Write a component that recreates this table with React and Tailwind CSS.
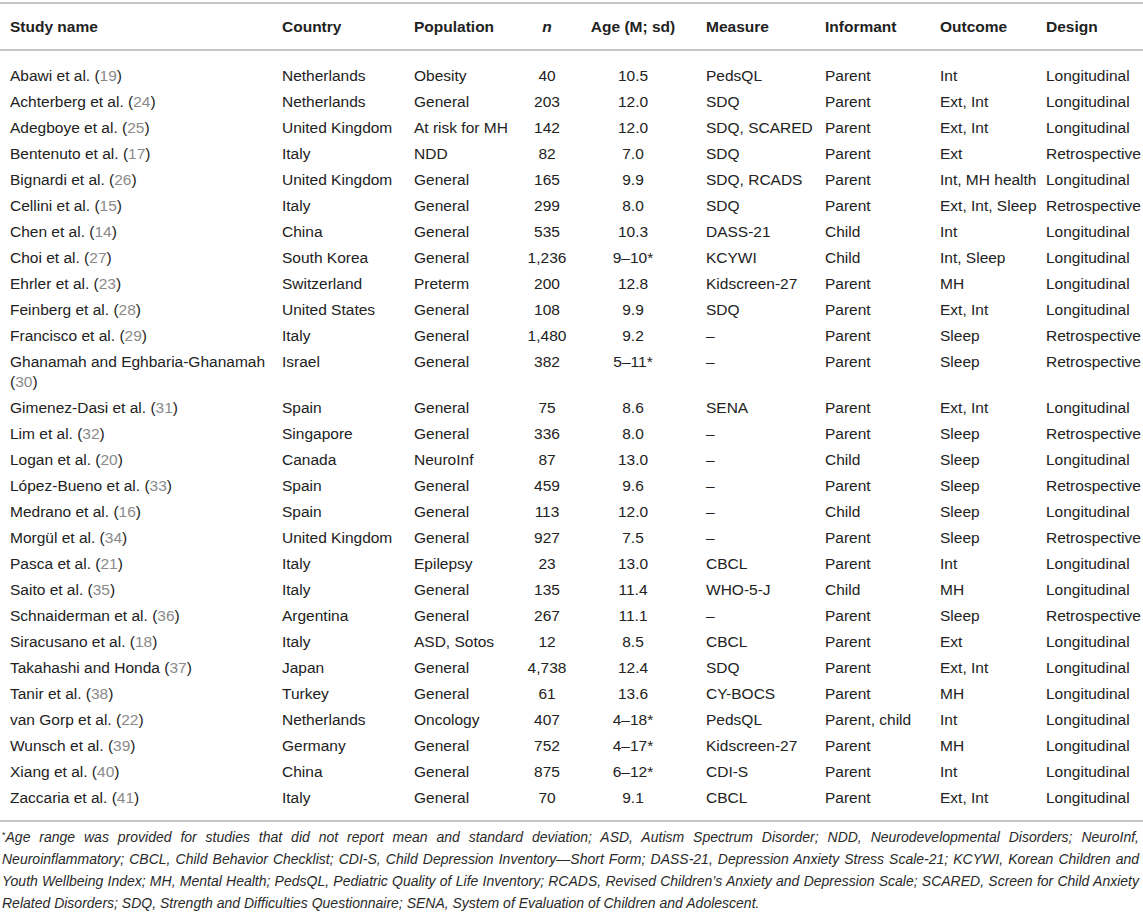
import React from 'react'

const rows = [
  ['Abawi et al.', '19', 'Netherlands', 'Obesity', '40', '10.5', 'PedsQL', 'Parent', 'Int', 'Longitudinal'],
  ['Achterberg et al.', '24', 'Netherlands', 'General', '203', '12.0', 'SDQ', 'Parent', 'Ext, Int', 'Longitudinal'],
  ['Adegboye et al.', '25', 'United Kingdom', 'At risk for MH', '142', '12.0', 'SDQ, SCARED', 'Parent', 'Ext, Int', 'Longitudinal'],
  ['Bentenuto et al.', '17', 'Italy', 'NDD', '82', '7.0', 'SDQ', 'Parent', 'Ext', 'Retrospective'],
  ['Bignardi et al.', '26', 'United Kingdom', 'General', '165', '9.9', 'SDQ, RCADS', 'Parent', 'Int, MH health', 'Longitudinal'],
  ['Cellini et al.', '15', 'Italy', 'General', '299', '8.0', 'SDQ', 'Parent', 'Ext, Int, Sleep', 'Retrospective'],
  ['Chen et al.', '14', 'China', 'General', '535', '10.3', 'DASS-21', 'Child', 'Int', 'Longitudinal'],
  ['Choi et al.', '27', 'South Korea', 'General', '1,236', '9–10*', 'KCYWI', 'Child', 'Int, Sleep', 'Longitudinal'],
  ['Ehrler et al.', '23', 'Switzerland', 'Preterm', '200', '12.8', 'Kidscreen-27', 'Parent', 'MH', 'Longitudinal'],
  ['Feinberg et al.', '28', 'United States', 'General', '108', '9.9', 'SDQ', 'Parent', 'Ext, Int', 'Longitudinal'],
  ['Francisco et al.', '29', 'Italy', 'General', '1,480', '9.2', '–', 'Parent', 'Sleep', 'Retrospective'],
  ['Ghanamah and Eghbaria-Ghanamah', '30', 'Israel', 'General', '382', '5–11*', '–', 'Parent', 'Sleep', 'Retrospective'],
  ['Gimenez-Dasi et al.', '31', 'Spain', 'General', '75', '8.6', 'SENA', 'Parent', 'Ext, Int', 'Longitudinal'],
  ['Lim et al.', '32', 'Singapore', 'General', '336', '8.0', '–', 'Parent', 'Sleep', 'Retrospective'],
  ['Logan et al.', '20', 'Canada', 'NeuroInf', '87', '13.0', '–', 'Child', 'Sleep', 'Longitudinal'],
  ['López-Bueno et al.', '33', 'Spain', 'General', '459', '9.6', '–', 'Parent', 'Sleep', 'Retrospective'],
  ['Medrano et al.', '16', 'Spain', 'General', '113', '12.0', '–', 'Child', 'Sleep', 'Longitudinal'],
  ['Morgül et al.', '34', 'United Kingdom', 'General', '927', '7.5', '–', 'Parent', 'Sleep', 'Retrospective'],
  ['Pasca et al.', '21', 'Italy', 'Epilepsy', '23', '13.0', 'CBCL', 'Parent', 'Int', 'Longitudinal'],
  ['Saito et al.', '35', 'Italy', 'General', '135', '11.4', 'WHO-5-J', 'Child', 'MH', 'Longitudinal'],
  ['Schnaiderman et al.', '36', 'Argentina', 'General', '267', '11.1', '–', 'Parent', 'Sleep', 'Retrospective'],
  ['Siracusano et al.', '18', 'Italy', 'ASD, Sotos', '12', '8.5', 'CBCL', 'Parent', 'Ext', 'Longitudinal'],
  ['Takahashi and Honda', '37', 'Japan', 'General', '4,738', '12.4', 'SDQ', 'Parent', 'Ext, Int', 'Longitudinal'],
  ['Tanir et al.', '38', 'Turkey', 'General', '61', '13.6', 'CY-BOCS', 'Parent', 'MH', 'Longitudinal'],
  ['van Gorp et al.', '22', 'Netherlands', 'Oncology', '407', '4–18*', 'PedsQL', 'Parent, child', 'Int', 'Longitudinal'],
  ['Wunsch et al.', '39', 'Germany', 'General', '752', '4–17*', 'Kidscreen-27', 'Parent', 'MH', 'Longitudinal'],
  ['Xiang et al.', '40', 'China', 'General', '875', '6–12*', 'CDI-S', 'Parent', 'Int', 'Longitudinal'],
  ['Zaccaria et al.', '41', 'Italy', 'General', '70', '9.1', 'CBCL', 'Parent', 'Ext, Int', 'Longitudinal'],
]

const cols = 'grid grid-cols-[282px_132px_96px_74px_98px_143px_115px_106px_97px]'

function Rule() {
  return <div className="h-[2px] bg-[#c6c6c6]" />
}

export default function App() {
  return (
    <div className="w-[1143px] h-[912px] bg-white text-[#222] font-['Liberation_Sans',Arial,sans-serif] overflow-hidden pt-[2px]">
      <Rule />

      {/* header */}
      <div className={`${cols} h-[45px] items-center text-[15.5px] font-bold`}>
        <div className="pl-[10px]">Study name</div>
        <div>Country</div>
        <div>Population</div>
        <div className="text-center italic">n</div>
        <div className="text-center">Age (M; sd)</div>
        <div className="pl-[24px]">Measure</div>
        <div>Informant</div>
        <div>Outcome</div>
        <div>Design</div>
      </div>
      <Rule />

      {/* body */}
      <div className="pt-[12px] pb-[9px] text-[15.5px] leading-[20px]">
        {rows.map((r) => (
          <div key={r[0]} className={`${cols} py-[3px]`}>
            <div className="pl-[10px]">
              {r[0]} (<span className="text-[#8a8a8a]">{r[1]}</span>)
            </div>
            <div>{r[2]}</div>
            <div className="whitespace-nowrap">{r[3]}</div>
            <div className="text-center">{r[4]}</div>
            <div className="text-center">{r[5]}</div>
            <div className="pl-[24px]">{r[6]}</div>
            <div>{r[7]}</div>
            <div>{r[8]}</div>
            <div>{r[9]}</div>
          </div>
        ))}
      </div>
      <Rule />

      {/* footnote */}
      <div className="pt-[4px] pl-[2px] pr-[4px] text-[14px] leading-[22px] italic text-[#2a2a2a]">
        <div className="text-justify [text-align-last:justify]">
          <sup className="text-[9px] not-italic">*</sup>Age range was provided for studies that did not report mean and standard deviation; ASD, Autism Spectrum Disorder; NDD, Neurodevelopmental Disorders; NeuroInf,
        </div>
        <div className="text-justify [text-align-last:justify]">
          Neuroinflammatory; CBCL, Child Behavior Checklist; CDI-S, Child Depression Inventory—Short Form; DASS-21, Depression Anxiety Stress Scale-21; KCYWI, Korean Children and
        </div>
        <div className="text-justify [text-align-last:justify]">
          Youth Wellbeing Index; MH, Mental Health; PedsQL, Pediatric Quality of Life Inventory; RCADS, Revised Children’s Anxiety and Depression Scale; SCARED, Screen for Child Anxiety
        </div>
        <div>
          Related Disorders; SDQ, Strength and Difficulties Questionnaire; SENA, System of Evaluation of Children and Adolescent.
        </div>
      </div>
    </div>
  )
}
